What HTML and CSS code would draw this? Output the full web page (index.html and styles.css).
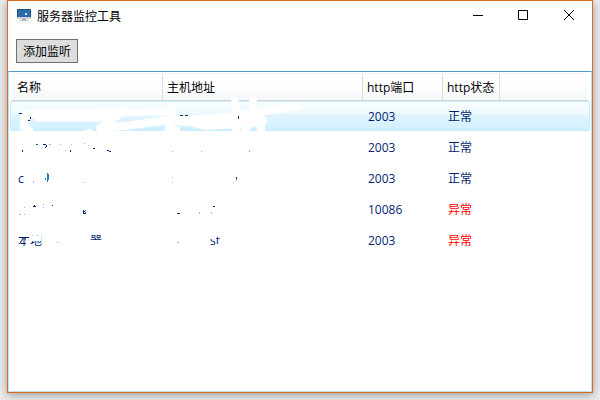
FILE: index.html
```
<!DOCTYPE html>
<html lang="zh-CN">
<head>
<meta charset="utf-8">
<title>服务器监控工具</title>
<link rel="stylesheet" href="styles.css">
</head>
<body>
<main class="window">
  <header class="titlebar">
    <svg class="app-icon" width="16" height="16" viewBox="0 0 16 16">
      <path fill="#f5f5f5" d="M1 12h14v3H1z"/>
      <rect x="1" y="1" width="14" height="9" rx="1" fill="#24507d"/>
      <rect x="2" y="2" width="12" height="7" fill="#2b6cae"/>
      <path fill="#d5e4f2" d="M9 5h2v2H9z"/>
      <path fill="#c8cdd1" d="M1 9h14v2H1z"/>
      <path fill="#8f9496" d="M6 11h4v1H6z"/>
      <path fill="#c0c2c3" d="M4 12h8v1H4z"/>
    </svg>
    <h1 class="title">服务器监控工具</h1>
    <svg class="controls" width="102" height="12" viewBox="0 0 102 12">
      <path d="M0 6.500h10M45.500 1.500h9v9h-9zM91 1l10 10M101 1l-10 10" fill="none" stroke="#000"/>
    </svg>
  </header>
  <div class="toolbar"><button class="add">添加监听</button></div>
  <section class="list">
    <div class="row head"><span>名称</span><span>主机地址</span><span>http端口</span><span>http状态</span><span></span></div>
    <div class="row selected"><span></span><span></span><span>2003</span><span>正常</span></div>
    <div class="row"><span></span><span></span><span>2003</span><span>正常</span></div>
    <div class="row"><span>c</span><span></span><span>2003</span><span>正常</span></div>
    <div class="row"><span></span><span></span><span>10086</span><span class="error">异常</span></div>
    <div class="row"><span><i>本</i><i class="lower">地</i><i class="upper">器</i></span><span><i class="tail">st</i></span><span>2003</span><span class="error">异常</span></div>
    <svg class="brush" width="584" height="321" viewBox="8 71 584 321">
      <g fill="none" stroke="#fff" stroke-linecap="round" stroke-linejoin="round">
        <path stroke-width="9" d="M25 115L24 127L29 131"/>
        <path stroke-width="7" d="M38 118L75 118L110 118"/>
        <path stroke-width="8" d="M26 114L60 113L95 113L125 111"/>
        <path stroke-width="8" d="M122 112L112 120L100 128L125 126L160 121L175 119"/>
        <path stroke-width="7" d="M115 113L165 112"/>
        <path stroke-width="5" d="M87 132L90 131"/>
        <path stroke-width="8" d="M172 107L170 122L168 133L176 130"/>
        <path stroke-width="10" d="M174 120L190 121L205 125L235 123L262 121"/>
        <path stroke-width="8" d="M298 106L265 111L230 117L180 120M235 102L237 116L236 133"/>
        <path stroke-width="8" d="M253 100L253 116L244 133M260 115L261 132"/>
      </g>
      <path fill="#fff" d="M18 232h23v5H18zM29 236h12v5H29zM26 238h4v10h-4zM18 240h2v3h-2zM90 240h14v9H90zM209 235h7v4h-7zM217 244h6v5h-6z"/>
      <g fill="#14276a">
        <path d="M19 113h3v1h-3zM30 117h1v2h-1zM28 120h2v1h-2zM180 115h3v1h-3zM185 115h3v1h-3zM238 116h1v3h-1z"/>
        <path d="M36 144h2v1h-2zM43 144h3v1h-3zM46 145h1v2h-1zM45 147h1v1h-1zM22 150h1v2h-1zM70 150h1v2h-1zM93 148h2v1h-2zM107 150h2v1h-2zM109 151h2v1h-2z"/>
        <path d="M33 206h3v1h-3zM34 205h1v2h-1zM52 205h1v1h-1zM83 210h1v4h-1zM84 211h1v1h-1zM84 213h2v1h-2zM177 213h3v1h-3zM213 206h2v1h-2z"/>
        <path d="M236 177h1v2h-1z"/>
      </g>
      <g fill="#277fc0"><path d="M47 173h1v9h-1zM48 174h1v6h-1zM45 178h1v2h-1zM85 210h1v1h-1zM85 212h1v1h-1zM37 144h1v1h-1z"/></g>
      <g fill="#a9b5d2"><path d="M33 181h1v2h-1zM83 182h1v1h-1zM24 207h1v1h-1zM19 214h2v1h-2zM24 214h1v1h-1zM43 204h1v1h-1zM43 207h1v1h-1zM57 242h1v1h-1zM32 235h1v1h-1zM37 235h1v1h-1zM49 144h2v1h-2zM60 144h1v1h-1zM65 150h1v1h-1zM71 144h1v1h-1zM84 143h1v1h-1zM88 145h1v1h-1zM172 177h1v1h-1zM172 182h1v1h-1zM199 212h1v2h-1zM211 212h1v2h-1zM177 242h2v1h-2zM172 151h1v1h-1zM201 151h1v1h-1zM249 150h1v2h-1zM236 179h1v2h-1zM233 182h1v1h-1z"/></g>
    </svg>
  </section>
</main>
</body>
</html>
```
FILE: styles.css
```
* { box-sizing: border-box; }
body {
  margin: 0;
  height: 400px;
  overflow: hidden;
  padding: 0 7px 7px;
  background: #ececec;
  font: 12px/16px "Open Sans", "Noto Sans CJK SC", sans-serif;
  color: #000;
}
.window {
  height: 393px;
  border: 1px solid #d86b1c;
  background: #fff;
  box-shadow: 0 2px 9px rgba(0, 0, 0, .35);
  display: flex;
  flex-direction: column;
}
.titlebar {
  height: 30px;
  display: flex;
  align-items: center;
  padding: 0 17px 0 8px;
}
.title { margin: 1px 0 0 5px; font-size: 12px; font-weight: 400; }
.controls { margin-left: auto; margin-top: -2px; }
.toolbar { height: 40px; padding: 8px 8px 0; }
.add {
  display: block;
  width: 62px;
  height: 24px;
  padding: 1px 0 0;
  border: 1px solid #707070;
  background: #ddd;
  color: #000;
  font: inherit;
}
.list {
  position: relative;
  flex: 1;
  border: 1px solid #c4dfec;
  border-top-color: #4c9ac4;
  padding: 1px 1px 0;
}
.row {
  display: grid;
  grid-template-columns: 152px 198px 80px 57px 1fr;
  height: 31px;
  align-items: center;
  color: #041e70;
}
.row > span { padding-left: 8px; white-space: nowrap; }
.head {
  height: 28px;
  margin: 0 2px;
  grid-template-columns: 151px 200px 80px 57px 1fr;
  border-top: 1px solid #f4f6f2;
  border-bottom: 1px solid #d5d5d5;
  background: linear-gradient(#fff 35%, #f5f7f8);
  color: #000;
}
.head > span {
  height: 26px;
  line-height: 27px;
  padding-left: 4px;
  border-right: 1px solid #dedede;
}
.head > span:first-child { padding-left: 5px; }
.head > span:last-child { border-right: 0; }
.selected {
  height: 30px;
  margin-bottom: 1px;
  padding-top: 2px;
  border: 1px solid #c9edfc;
  border-radius: 2px;
  background: linear-gradient(#f8fdff 0%, #edf9ff 42%, #e2f6ff 43%, #d0f0ff 100%);
}
.selected > span { padding-left: 7px; }
.row .error { color: #f00; }
.row i { display: inline-block; font-style: normal; }
.row .upper { margin-left: 48px; }
.row .tail { margin-left: 40px; }
.brush { position: absolute; left: -1px; top: -1px; }
```
